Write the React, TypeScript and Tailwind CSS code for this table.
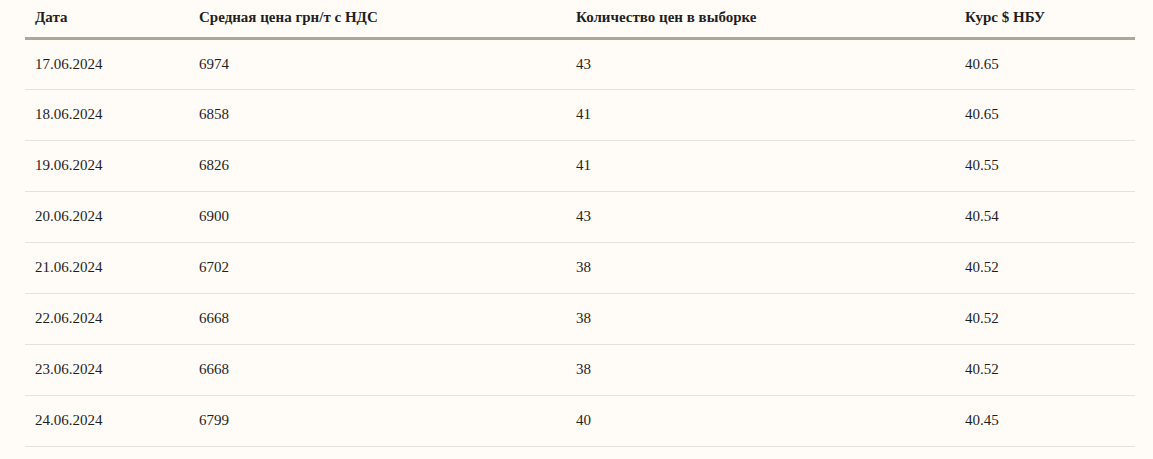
const rows = [
  ["17.06.2024", "6974", "43", "40.65"],
  ["18.06.2024", "6858", "41", "40.65"],
  ["19.06.2024", "6826", "41", "40.55"],
  ["20.06.2024", "6900", "43", "40.54"],
  ["21.06.2024", "6702", "38", "40.52"],
  ["22.06.2024", "6668", "38", "40.52"],
  ["23.06.2024", "6668", "38", "40.52"],
  ["24.06.2024", "6799", "40", "40.45"],
]

const headers = ["Дата", "Средная цена грн/т с НДС", "Количество цен в выборке", "Курс $ НБУ"]

export default function App() {
  return (
    <div
      className="min-h-screen bg-[#fffcf8] px-[25px] text-[#1f1f1f]"
      style={{ fontFamily: '"Liberation Serif", "DejaVu Serif", serif' }}
    >
      <table className="w-[1110px] border-collapse text-left">
        <colgroup>
          <col className="w-[164px]" />
          <col className="w-[377px]" />
          <col className="w-[389px]" />
          <col />
        </colgroup>
        <thead>
          <tr className="h-[38px] border-b-[3px] border-[#a8a996]">
            {headers.map((h) => (
              <th key={h} className="pl-[10px] pb-[3px] align-middle text-[15px] font-bold">
                {h}
              </th>
            ))}
          </tr>
        </thead>
        <tbody>
          {rows.map((r) => (
            <tr key={r[0]} className="h-[51px] border-b border-[#e5e1dc]">
              {r.map((c, i) => (
                <td key={i} className="pl-[10px] align-middle text-[15px]">
                  {c}
                </td>
              ))}
            </tr>
          ))}
        </tbody>
      </table>
    </div>
  )
}
